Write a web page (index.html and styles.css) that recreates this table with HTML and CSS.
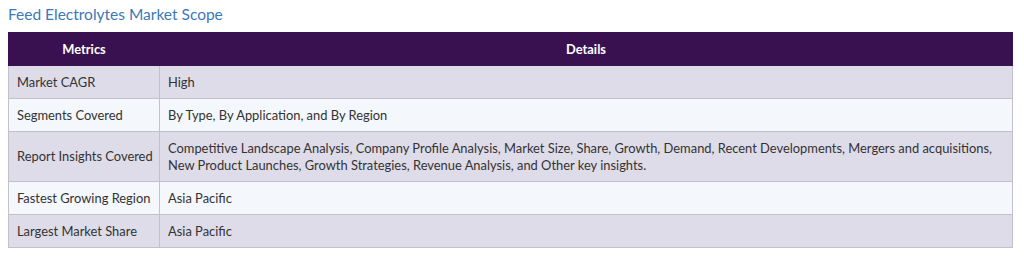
FILE: index.html
```html
<!DOCTYPE html>
<html>
<head>
<meta charset="utf-8">
<link rel="stylesheet" href="styles.css">
</head>
<body>
<h2 class="title">Feed Electrolytes Market Scope</h2>
<table class="scope">
<thead>
<tr><th class="c1">Metrics</th><th>Details</th></tr>
</thead>
<tbody>
<tr class="odd"><td class="c1">Market CAGR</td><td>High</td></tr>
<tr class="even"><td class="c1">Segments Covered</td><td>By Type, By Application, and By Region</td></tr>
<tr class="odd tall"><td class="c1">Report Insights Covered</td><td>Competitive Landscape Analysis, Company Profile Analysis, Market Size, Share, Growth, Demand, Recent Developments, Mergers and acquisitions, New Product Launches, Growth Strategies, Revenue Analysis, and Other key insights.</td></tr>
<tr class="even"><td class="c1">Fastest Growing Region</td><td>Asia Pacific</td></tr>
<tr class="odd"><td class="c1">Largest Market Share</td><td>Asia Pacific</td></tr>
</tbody>
</table>
</body>
</html>
```
FILE: styles.css
```css
body {
  margin: 0;
  padding: 4px 8px 0 8px;
  background: #fff;
  font-family: Lato, "Open Sans", sans-serif;
}
.title {
  margin: 0 0 8px 0;
  font-size: 15.5px;
  font-weight: 400;
  color: #3b79b8;
  line-height: 20px;
}
.scope {
  width: 1005px;
  border-collapse: collapse;
  font-size: 12.9px;
  color: #333;
  table-layout: fixed;
}
.scope th, .scope td {
  border: 1px solid #c3c0cc;
  padding: 0 8px;
  text-align: left;
  line-height: 17px;
}
.scope th {
  background: #3a1150;
  color: #fff;
  font-weight: 700;
  text-align: center;
  height: 32px;
  border-color: #3a1150;
}
.scope td {
  height: 32px;
}
.scope .c1 {
  width: 134px;
  white-space: nowrap;
}
.odd td { background: #dfdce9; }
.even td { background: #f4f7fb; }
.tall td { height: 49px; }
```
